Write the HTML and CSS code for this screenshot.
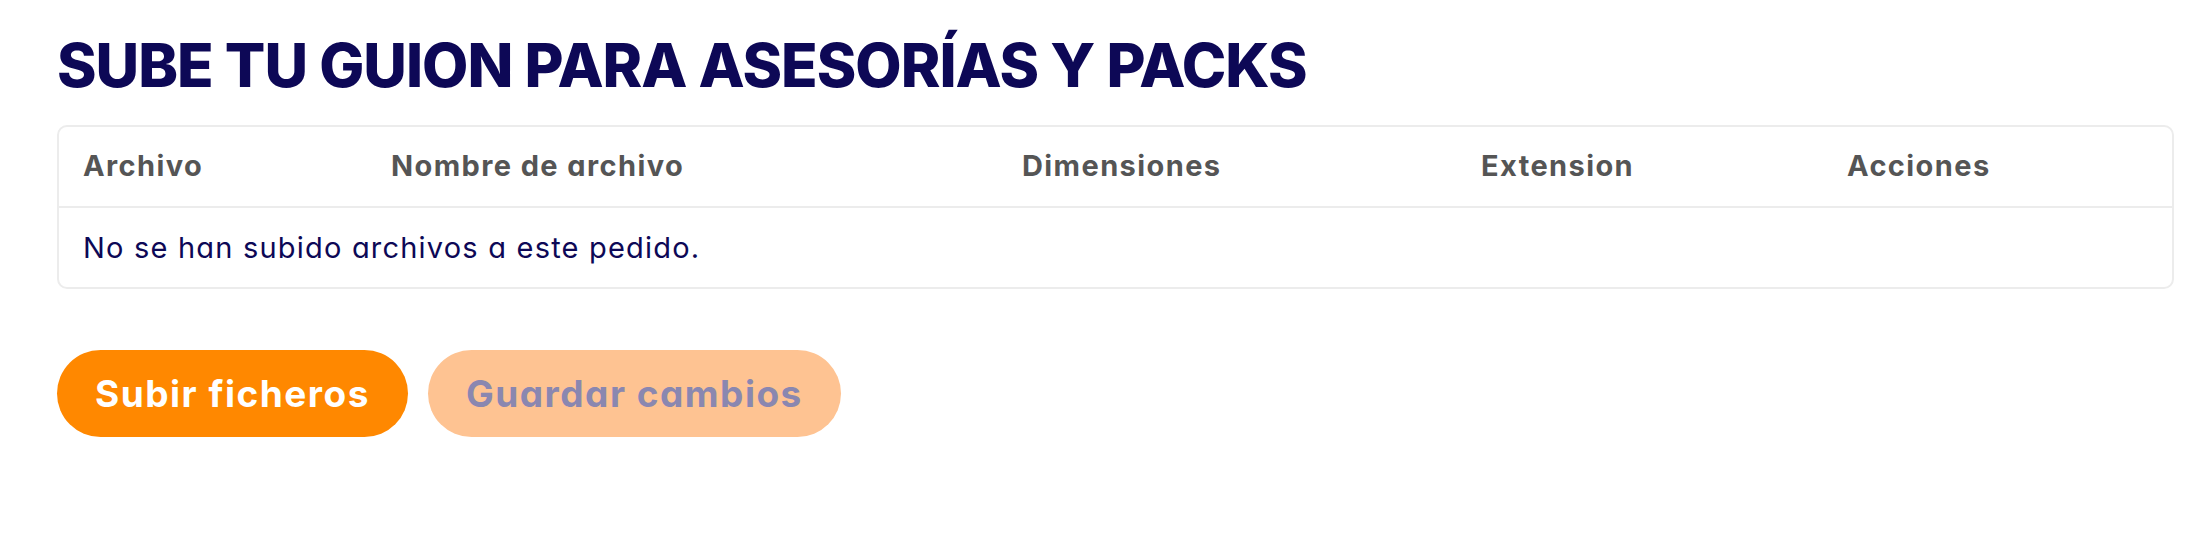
FILE: index.html
```html
<!DOCTYPE html>
<html lang="es">
<head>
<meta charset="utf-8">
<title>Sube tu guion</title>
<link rel="stylesheet" href="styles.css">
</head>
<body>
<main class="page">
  <h1 class="title">SUBE TU GUION PARA ASESORÍAS Y PACKS</h1>
  <div class="table-wrap">
    <table class="files">
      <colgroup>
        <col class="c1"><col class="c2"><col class="c3"><col class="c4"><col class="c5">
      </colgroup>
      <thead>
        <tr>
          <th>Archivo</th>
          <th>Nombre de archivo</th>
          <th>Dimensiones</th>
          <th>Extension</th>
          <th>Acciones</th>
        </tr>
      </thead>
      <tbody>
        <tr>
          <td colspan="5">No se han subido archivos a este pedido.</td>
        </tr>
      </tbody>
    </table>
  </div>
  <div class="actions">
    <button class="btn btn-primary" type="button">Subir ficheros</button>
    <button class="btn btn-disabled" type="button" disabled>Guardar cambios</button>
  </div>
</main>
</body>
</html>
```

FILE: styles.css
```css
html, body {
  margin: 0;
  padding: 0;
  background: #ffffff;
}

body {
  font-family: Inter, "Open Sans", "Liberation Sans", sans-serif;
  font-feature-settings: "cv11";
  color: #0d0856;
}

.page {
  padding: 0 26px 0 57px;
}

.title {
  margin: 0;
  padding-top: 29px;
  font-size: 60px;
  line-height: 72px;
  font-weight: 800;
  color: #0d0856;
  letter-spacing: -1px;
}

.table-wrap {
  margin-top: 24px;
  border: 2px solid #ececec;
  border-radius: 10px;
  overflow: hidden;
}

.files {
  width: 100%;
  border-collapse: collapse;
  table-layout: fixed;
}

.c1 { width: 308px; }
.c2 { width: 631px; }
.c3 { width: 459px; }
.c4 { width: 366px; }
.c5 { width: auto; }

.files th {
  text-align: left;
  font-size: 29px;
  line-height: 36px;
  font-weight: 700;
  color: #555555;
  letter-spacing: 1.4px;
  padding: 21px 24px 22px;
  border-bottom: 2px solid #ececec;
}

.files td {
  font-size: 29px;
  line-height: 36px;
  font-weight: 400;
  color: #0d0856;
  letter-spacing: 1.2px;
  padding: 22px 24px 21px;
}

.actions {
  display: flex;
  gap: 20px;
  margin-top: 61px;
}

.btn {
  height: 87px;
  padding: 0 38px;
  border: none;
  border-radius: 44px;
  font-family: inherit;
  font-feature-settings: "cv11";
  font-size: 37px;
  line-height: 87px;
  font-weight: 700;
  letter-spacing: 1.5px;
}

.btn-primary {
  background: #ff8800;
  color: #ffffff;
}

.btn-disabled {
  background: #fec392;
  color: #8a87b0;
}
```
